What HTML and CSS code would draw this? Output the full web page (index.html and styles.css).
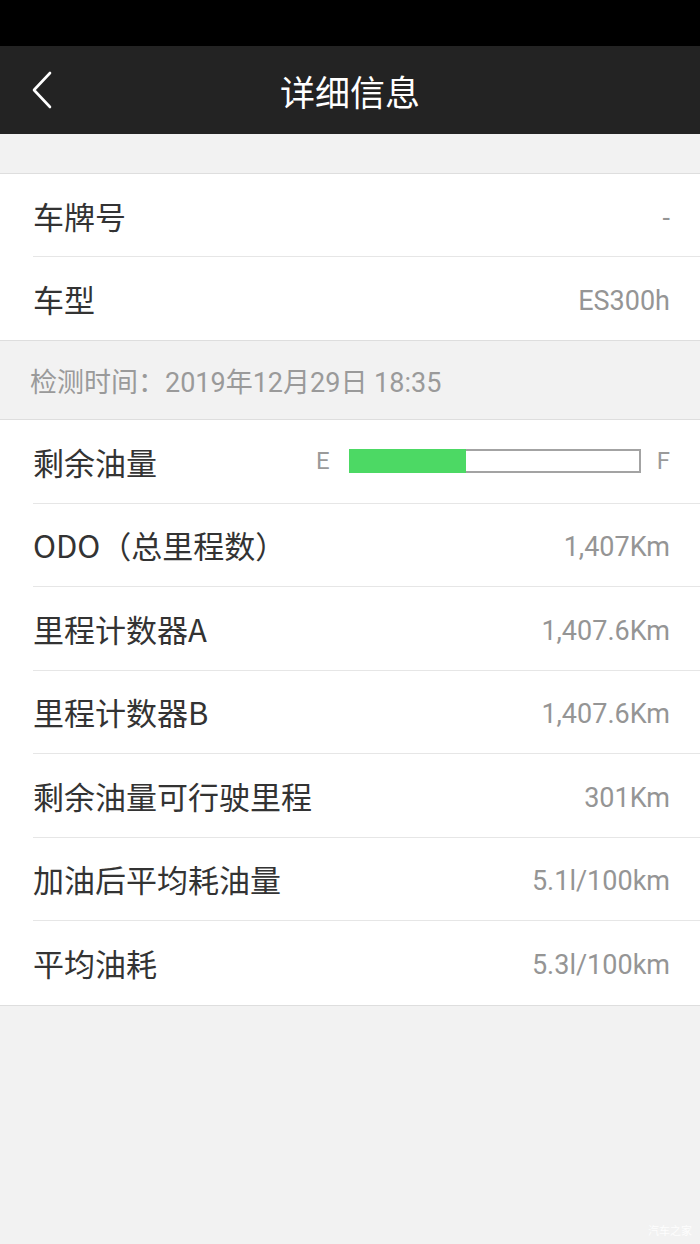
FILE: index.html
```html
<!DOCTYPE html>
<html lang="zh-CN">
<head>
<meta charset="utf-8">
<title>详细信息</title>
<link rel="stylesheet" href="styles.css">
</head>
<body>
<div class="page">
  <div class="statusbar"></div>
  <header class="navbar">
    <button class="back" aria-label="返回">
      <svg width="24" height="38" viewBox="0 0 24 38"><path d="M20 2 L4 19 L20 36" fill="none" stroke="#fff" stroke-width="2.6" stroke-linecap="round" stroke-linejoin="round"/></svg>
    </button>
    <h1 class="title">详细信息</h1>
  </header>
  <div class="gap"></div>
  <section class="group">
    <div class="row"><span class="label">车牌号</span><span class="value">-</span></div>
    <div class="row"><span class="label">车型</span><span class="value">ES300h</span></div>
  </section>
  <div class="section-head">检测时间：2019年12月29日 18:35</div>
  <section class="group group2">
    <div class="row">
      <span class="label">剩余油量</span>
      <div class="fuel">
        <span class="fuel-mark fuel-e">E</span>
        <div class="fuel-bar">
          <div class="fuel-fill" style="width:117px"></div>
          <div class="fuel-rest"></div>
        </div>
        <span class="fuel-mark fuel-f">F</span>
      </div>
    </div>
    <div class="row"><span class="label">ODO（总里程数）</span><span class="value">1,407Km</span></div>
    <div class="row"><span class="label">里程计数器A</span><span class="value">1,407.6Km</span></div>
    <div class="row"><span class="label">里程计数器B</span><span class="value">1,407.6Km</span></div>
    <div class="row"><span class="label">剩余油量可行驶里程</span><span class="value">301Km</span></div>
    <div class="row"><span class="label">加油后平均耗油量</span><span class="value">5.1l/100km</span></div>
    <div class="row"><span class="label">平均油耗</span><span class="value">5.3l/100km</span></div>
  </section>
  <div class="footer"><span class="watermark">汽车之家</span></div>
</div>
</body>
</html>
```

FILE: styles.css
```css
* { box-sizing: border-box; }
html, body { margin: 0; padding: 0; }
body {
  background: #f2f2f2;
  font-family: Roboto, "Noto Sans CJK SC", "Noto Sans", sans-serif;
}
.page {
  width: 700px;
  height: 1244px;
  display: flex;
  flex-direction: column;
  background: #f2f2f2;
}
.statusbar {
  height: 46px;
  background: #000;
  flex: none;
}
.navbar {
  height: 88px;
  background: #232323;
  display: flex;
  align-items: center;
  justify-content: center;
  position: relative;
  flex: none;
}
.back {
  position: absolute;
  left: 30px;
  top: 25px;
  width: 26px;
  height: 38px;
  padding: 0;
  border: 0;
  background: none;
  display: flex;
  align-items: center;
}
.title {
  margin: 0;
  color: #fff;
  font-family: "Noto Sans CJK SC", sans-serif;
  font-weight: 400;
  font-size: 35px;
  line-height: 1;
}
.gap { height: 39px; flex: none; }
.group {
  background: #fff;
  border-top: 1px solid #dedede;
  border-bottom: 1px solid #dedede;
  flex: none;
}
.row {
  height: 83px;
  margin-left: 33px;
  padding-right: 30px;
  display: flex;
  align-items: center;
  justify-content: space-between;
  border-bottom: 1px solid #e6e6e6;
}
.group2 .row { height: 83.5px; }
.row:last-child { border-bottom: 0; }
.label {
  font-family: "Noto Sans CJK SC", sans-serif;
  font-size: 31px;
  color: #333;
  line-height: 1;
}
.value {
  font-family: Roboto, "Noto Sans CJK SC", sans-serif;
  font-size: 27px;
  color: #959595;
  line-height: 1;
  padding-top: 6px;
}
.section-head {
  height: 78px;
  padding-left: 30px;
  display: flex;
  align-items: center;
  font-family: Roboto, "Noto Sans CJK SC", sans-serif;
  font-size: 27px;
  color: #9a9a9a;
  flex: none;
}
.fuel {
  display: flex;
  align-items: center;
}
.fuel-mark {
  font-family: Roboto, sans-serif;
  font-size: 24px;
  color: #9a9a9a;
  line-height: 1;
}
.fuel-e { margin-right: 19px; }
.fuel-f { margin-left: 16px; }
.fuel-bar {
  width: 292px;
  height: 24px;
  display: flex;
}
.fuel-fill {
  background: #4cd964;
  height: 100%;
  flex: none;
}
.fuel-rest {
  flex: 1;
  height: 100%;
  border: 2px solid #a3a3a3;
  border-left: 0;
  background: #fff;
}
.footer {
  flex: 1;
  display: flex;
  align-items: flex-end;
  justify-content: flex-end;
  padding: 0 8px 6px 0;
}
.watermark {
  font-family: "Noto Sans CJK SC", sans-serif;
  font-size: 11px;
  color: rgba(255,255,255,0.9);
}
```
